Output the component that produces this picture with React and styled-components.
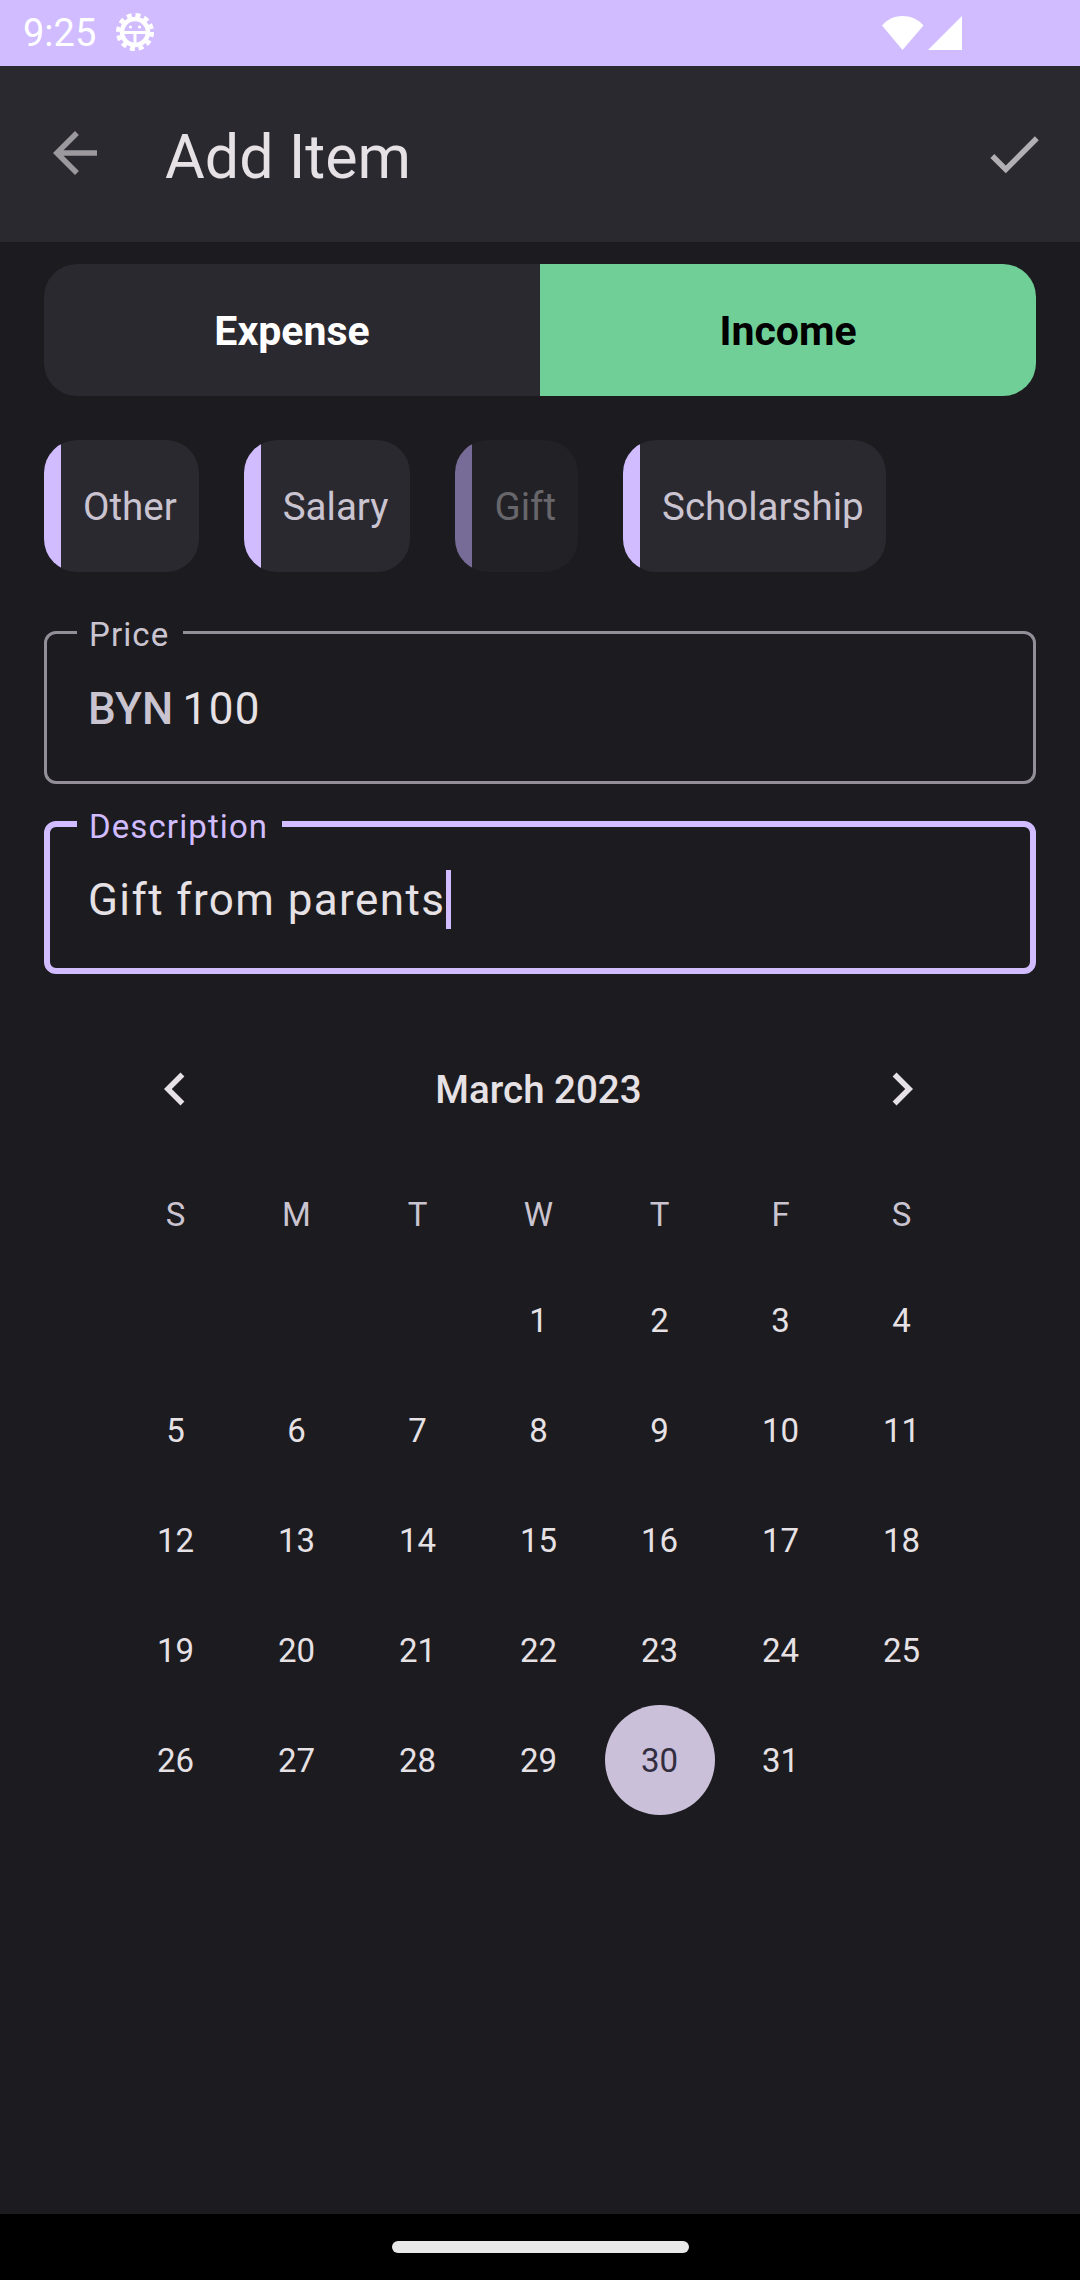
import styled, { createGlobalStyle } from 'styled-components'

const GlobalStyle = createGlobalStyle`
  html, body {
    margin: 0;
    padding: 0;
    background: #1c1b1f;
    font-family: Roboto, "Liberation Sans", sans-serif;
  }
`

const Page = styled.div`
  width: 1080px;
  height: 2280px;
  display: flex;
  flex-direction: column;
  overflow: hidden;
  background: #1c1b1f;
`

const StatusBar = styled.div`
  height: 66px;
  flex: none;
  background: #d0bcff;
  display: flex;
  align-items: center;
  padding: 0 118px 0 23px;
  color: #fff;
`

const Time = styled.span`
  font-size: 38px;
  line-height: 66px;
  margin-right: 20px;
`

const Gear = styled.svg`
  display: block;
  width: 38px;
  height: 38px;
  margin-bottom: 3px;
  fill: none;
  stroke: #fff;
`

const StatusIcons = styled.div`
  margin-left: auto;
  display: flex;
  align-items: center;
  gap: 4px;
`

const AppBar = styled.header`
  height: 176px;
  flex: none;
  background: #2b2930;
  display: flex;
  align-items: center;
  padding: 0 33px 0 42px;
  color: #e6e1e5;
`

const Title = styled.h1`
  flex: 1;
  margin: 5px 0 0 57px;
  font-size: 61px;
  font-weight: 400;
`

const Icon = styled.svg`
  display: block;
  flex: none;
  width: 66px;
  height: 66px;
  margin-bottom: ${(p) => p.$lift || 0}px;
  fill: ${(p) => p.$color || 'currentColor'};
`

const Content = styled.main`
  flex: 1;
  padding: 22px 44px 0;
`

const Toggle = styled.div`
  height: 132px;
  display: grid;
  grid-template-columns: 1fr 1fr;
  border-radius: 33px;
  overflow: hidden;
`

const ToggleOption = styled.div`
  display: flex;
  align-items: center;
  justify-content: center;
  padding-top: 2px;
  font-size: 41px;
  font-weight: 700;
  background: ${(p) => (p.$active ? '#6fcf97' : '#2b2930')};
  color: ${(p) => (p.$active ? '#000' : '#fff')};
`

const Chips = styled.div`
  display: flex;
  gap: 45px;
  margin-top: 44px;
`

const Chip = styled.div`
  height: 132px;
  display: flex;
  border-radius: 33px;
  overflow: hidden;
  background: ${(p) => (p.$disabled ? '#222126' : '#2b2930')};
  color: ${(p) => (p.$disabled ? '#67666a' : '#cac4d0')};
  font-size: 38.5px;
`

const ChipStripe = styled.span`
  width: 17px;
  background: ${(p) => (p.$disabled ? '#776b97' : '#d0bcff')};
`

const ChipLabel = styled.span`
  display: flex;
  align-items: center;
  padding: 0 22px;
`

const Field = styled.fieldset`
  box-sizing: border-box;
  height: ${(p) => (p.$focused ? 168.5 : 170)}px;
  margin: ${(p) => (p.$focused ? 21.5 : 42)}px 0 0;
  padding: 0 0 0 ${(p) => (p.$focused ? 38 : 41)}px;
  border: ${(p) => (p.$focused ? '6px solid #d0bcff' : '3px solid #938f99')};
  border-radius: 12px;
  display: block;
  min-width: 0;
`

const FieldLabel = styled.legend`
  margin-left: -11px;
  padding: 4px 14px 0 12px;
  font-size: 33px;
  line-height: 33px;
  letter-spacing: 1.1px;
  color: ${(p) => (p.$focused ? '#d0bcff' : '#cac4d0')};
`

const FieldValue = styled.div`
  display: flex;
  align-items: center;
  height: ${(p) => (p.$focused ? 114 : 116)}px;
  font-size: 44px;
  letter-spacing: 1.4px;
  color: #e6e1e5;
`

const Prefix = styled.span`
  font-weight: 500;
  color: #cac4d0;
  margin-right: 9px;
  letter-spacing: 0.3px;
`

const Caret = styled.span`
  width: 5px;
  height: 59px;
  margin-left: 1px;
  background: #d0bcff;
`

const Calendar = styled.section`
  width: 847px;
  margin: 65px 0 0 71px;
`

const MonthRow = styled.div`
  display: flex;
  align-items: center;
  justify-content: space-between;
  height: 100px;
  padding: 0 27px;
  color: #e6e1e5;
`

const Month = styled.span`
  font-size: 38.5px;
  font-weight: 500;
`

const DayGrid = styled.div`
  display: grid;
  grid-template-columns: repeat(7, 121px);
  grid-template-rows: 102px;
  grid-auto-rows: 110px;
  margin-top: 24px;
`

const WeekDay = styled.div`
  display: flex;
  align-items: center;
  justify-content: center;
  font-size: 33px;
  color: #cac4d0;
`

const Day = styled.div`
  width: 110px;
  height: 110px;
  justify-self: center;
  display: flex;
  align-items: center;
  justify-content: center;
  border-radius: 50%;
  font-size: 33px;
  background: ${(p) => (p.$selected ? '#cbc0da' : 'transparent')};
  color: ${(p) => (p.$selected ? '#322e3f' : '#e6e1e5')};
`

const NavBar = styled.div`
  height: 66px;
  flex: none;
  background: #000;
  display: flex;
  justify-content: center;
  padding-top: 27px;
  box-sizing: border-box;
`

const HomePill = styled.div`
  width: 297px;
  height: 12px;
  border-radius: 6px;
  background: #e8e8e8;
`

const categories = [
  { label: 'Other' },
  { label: 'Salary' },
  { label: 'Gift', disabled: true },
  { label: 'Scholarship' },
]

const weekDays = ['S', 'M', 'T', 'W', 'T', 'F', 'S']
const blanks = [0, 1, 2]
const days = Array.from({ length: 31 }, (_, i) => i + 1)

const GearIcon = () => (
  <Gear viewBox="0 0 38 38">
    <circle cx="19" cy="19" r="17" strokeWidth="4" strokeDasharray="5 3.9" />
    <circle cx="19" cy="19" r="13" strokeWidth="4.500" />
    <path d="M7 19.500h24M19 19.500V31" strokeWidth="3" />
    <circle cx="14.500" cy="14" r="1.600" fill="#fff" stroke="none" />
    <circle cx="23.500" cy="14" r="1.600" fill="#fff" stroke="none" />
  </Gear>
)

const App = () => {
  return (
    <>
      <GlobalStyle />
      <Page>
        <StatusBar>
          <Time>9:25</Time>
          <GearIcon />
          <StatusIcons>
            <svg width="42" height="36" viewBox="0 0 42 36" fill="#fff">
              <path d="M0 10.500C5.500 4 13 1 20.500 1S36 4 41.500 10.500L20.500 35z" />
            </svg>
            <svg width="34" height="34" viewBox="0 0 34 34" fill="#fff">
              <path d="M34 0v34H0z" />
            </svg>
          </StatusIcons>
        </StatusBar>

        <AppBar>
          <Icon viewBox="0 0 24 24" $color="#9b999e" $lift={3}>
            <path d="M20 11H7.830l5.590-5.590L12 4l-8 8 8 8 1.410-1.410L7.830 13H20v-2z" />
          </Icon>
          <Title>Add Item</Title>
          <Icon viewBox="0 0 24 24" $color="#b1afb3">
            <path d="M9 16.170L4.830 12l-1.420 1.410L9 19 21 7l-1.410-1.410z" />
          </Icon>
        </AppBar>

        <Content>
          <Toggle>
            <ToggleOption>Expense</ToggleOption>
            <ToggleOption $active>Income</ToggleOption>
          </Toggle>

          <Chips>
            {categories.map((c) => (
              <Chip key={c.label} $disabled={c.disabled}>
                <ChipStripe $disabled={c.disabled} />
                <ChipLabel>{c.label}</ChipLabel>
              </Chip>
            ))}
          </Chips>

          <Field>
            <FieldLabel>Price</FieldLabel>
            <FieldValue>
              <Prefix>BYN</Prefix>100
            </FieldValue>
          </Field>

          <Field $focused>
            <FieldLabel $focused>Description</FieldLabel>
            <FieldValue $focused>
              Gift from parents<Caret />
            </FieldValue>
          </Field>

          <Calendar>
            <MonthRow>
              <Icon viewBox="0 0 24 24">
                <path d="M15.410 7.410L14 6l-6 6 6 6 1.410-1.410L10.830 12z" />
              </Icon>
              <Month>March 2023</Month>
              <Icon viewBox="0 0 24 24">
                <path d="M8.590 16.590L10 18l6-6-6-6-1.410 1.410L13.170 12z" />
              </Icon>
            </MonthRow>
            <DayGrid>
              {weekDays.map((d, i) => (
                <WeekDay key={i}>{d}</WeekDay>
              ))}
              {blanks.map((b) => (
                <Day key={`blank-${b}`} />
              ))}
              {days.map((d) => (
                <Day key={d} $selected={d === 30}>
                  {d}
                </Day>
              ))}
            </DayGrid>
          </Calendar>
        </Content>

        <NavBar>
          <HomePill />
        </NavBar>
      </Page>
    </>
  )
}

export default App
